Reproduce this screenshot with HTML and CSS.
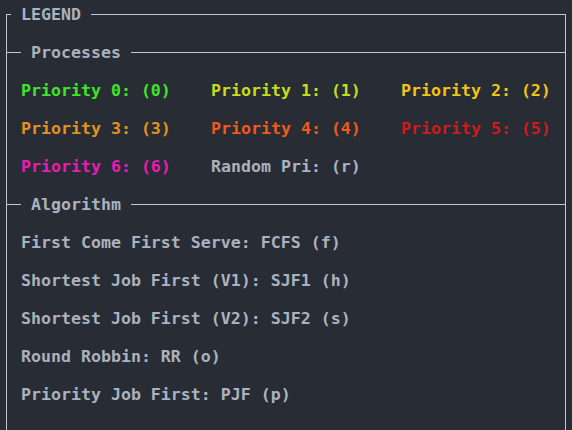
FILE: index.html
```html
<!DOCTYPE html>
<html>
<head>
<meta charset="utf-8">
<link rel="stylesheet" href="styles.css">
</head>
<body>
<div class="frame">
  <div class="title"><span class="label">LEGEND</span></div>
  <div class="section"><span class="label">Processes</span></div>
  <div class="grid">
    <span class="p0">Priority 0: (0)</span>
    <span class="p1">Priority 1: (1)</span>
    <span class="p2">Priority 2: (2)</span>
  </div>
  <div class="grid">
    <span class="p3">Priority 3: (3)</span>
    <span class="p4">Priority 4: (4)</span>
    <span class="p5">Priority 5: (5)</span>
  </div>
  <div class="grid">
    <span class="p6">Priority 6: (6)</span>
    <span>Random Pri: (r)</span>
  </div>
  <div class="section"><span class="label">Algorithm</span></div>
  <div class="item">First Come First Serve: FCFS (f)</div>
  <div class="item">Shortest Job First (V1): SJF1 (h)</div>
  <div class="item">Shortest Job First (V2): SJF2 (s)</div>
  <div class="item">Round Robbin: RR (o)</div>
  <div class="item">Priority Job First: PJF (p)</div>
</div>
</body>
</html>
```
FILE: styles.css
```css
html, body {
  margin: 0;
  padding: 0;
}
body {
  background: #282c34;
  color: #abb2bf;
  font-family: "DejaVu Sans Mono", monospace;
  font-weight: bold;
  font-size: 16.6px;
  line-height: 19px;
  height: 430px;
  overflow: hidden;
}
.frame {
  box-sizing: border-box;
  margin: 14px 0 0 6px;
  width: 560px;
  height: 416px;
  border: 1px solid #c3c7ce;
  border-bottom: none;
  display: flex;
  flex-direction: column;
  gap: 19px;
  white-space: pre;
}
.title {
  margin-top: -10px;
  height: 19px;
  padding-left: 4px;
  display: flex;
}
.label {
  background: #282c34;
  padding: 0 10px;
}
.section {
  height: 19px;
  display: flex;
  align-items: center;
}
.section::before {
  content: "";
  width: 14px;
  border-top: 1px solid #c3c7ce;
}
.section::after {
  content: "";
  flex: 1;
  border-top: 1px solid #c3c7ce;
}
.grid {
  height: 19px;
  padding-left: 14px;
  display: grid;
  grid-template-columns: 190px 190px 150px;
}
.item {
  height: 19px;
  padding-left: 14px;
}
.p0 { color: #3ee62a; }
.p1 { color: #c6dc1c; }
.p2 { color: #f2c41a; }
.p3 { color: #e3921f; }
.p4 { color: #f05a1c; }
.p5 { color: #cc1c1c; }
.p6 { color: #e81cb4; }
```
